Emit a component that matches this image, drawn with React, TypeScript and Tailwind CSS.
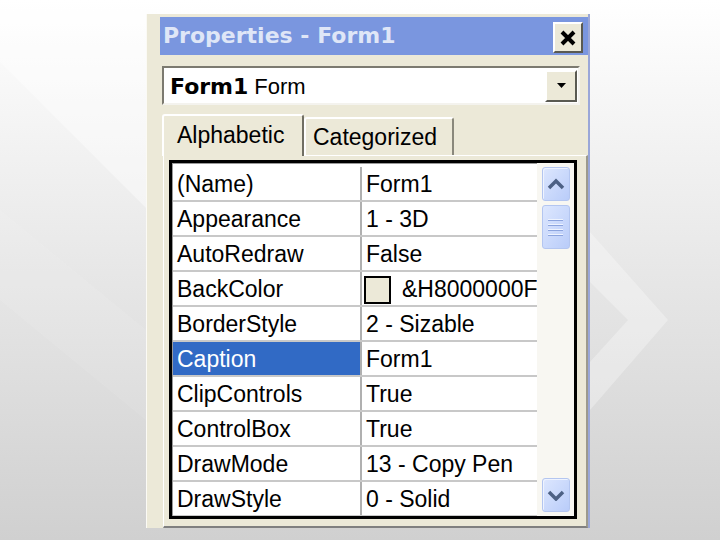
import React from "react";

type Row = { name: string; value: string; swatch?: boolean; selected?: boolean };

const rows: Row[] = [
  { name: "(Name)", value: "Form1" },
  { name: "Appearance", value: "1 - 3D" },
  { name: "AutoRedraw", value: "False" },
  { name: "BackColor", value: "&H8000000F", swatch: true },
  { name: "BorderStyle", value: "2 - Sizable" },
  { name: "Caption", value: "Form1", selected: true },
  { name: "ClipControls", value: "True" },
  { name: "ControlBox", value: "True" },
  { name: "DrawMode", value: "13 - Copy Pen" },
  { name: "DrawStyle", value: "0 - Solid" },
];

const sans = "font-['Liberation_Sans',Arial,sans-serif]";
const bold = "font-['DejaVu_Sans',Verdana,sans-serif] font-bold";

function ScrollButton({ dir }: { dir: "up" | "down" }) {
  return (
    <div className="mx-auto flex h-[34px] w-[28px] items-center justify-center rounded-[3px] border border-[#b4c6f0] bg-gradient-to-br from-[#dde7fe] to-[#b9ccf9] shadow-[inset_1px_1px_0_#eef3ff]">
      <svg width="18" height="12" viewBox="0 0 18 12">
        <polyline
          points={dir === "up" ? "2,10 9,3 16,10" : "2,3 9,10 16,3"}
          fill="none"
          stroke="#4d6185"
          strokeWidth="3.5"
        />
      </svg>
    </div>
  );
}

function GridRow({ row }: { row: Row }) {
  return (
    <div className="flex h-[35px] shrink-0 border-b-2 border-[#c8c8c8]">
      <div
        className={`flex w-[189px] shrink-0 items-center border-r-2 border-[#b0b0b0] pl-[4px] pt-[2px] ${
          row.selected ? "bg-[#316ac5] text-white" : "text-black"
        }`}
      >
        {row.name}
      </div>
      <div className="flex min-w-0 flex-1 items-center overflow-hidden whitespace-nowrap pl-[4px] pt-[2px] text-black">
        {row.swatch && (
          <span className="mr-[11px] ml-[-2px] h-[28px] w-[27px] shrink-0 border-2 border-black bg-[#ece9d8]" />
        )}
        {row.value}
      </div>
    </div>
  );
}

export default function App() {
  return (
    <div className="relative h-[540px] w-[720px] overflow-hidden bg-gradient-to-b from-white to-[#d0d0d0]">
      {/* faint background shapes */}
      <svg className="absolute inset-0" width="720" height="540" viewBox="0 0 720 540">
        <polygon points="0,0 146,0 146,208 0,62" fill="#ffffff" opacity="0.4" />
        <polygon points="0,210 146,330 146,420 0,300" fill="#ffffff" opacity="0.08" />
        <polygon points="590,232 668,320 590,410 590,362 628,320 590,282" fill="#ffffff" opacity="0.3" />
      </svg>

      <div className="relative ml-[146px] mt-[14px] flex h-[514px] w-[444px] border-l border-r-2 border-l-[#fbfaf5] border-r-[#9aa7d8] bg-[#ece9d8]">
        <div className="w-[13px] shrink-0" />
        <div className="flex flex-1 flex-col">
          {/* title bar */}
          <div className="mt-[3px] flex h-[38px] shrink-0 items-center justify-between bg-[#7a96df] pl-[3px]">
            <span className={`${bold} text-[22px] leading-none text-[#dfe6f7]`}>Properties - Form1</span>
            <div className="mr-[5px] mt-[3px] flex h-[31px] w-[30px] items-center justify-center border-2 border-b-[#5a5a52] border-l-white border-r-[#5a5a52] border-t-white bg-[#ece9d8]">
              <svg width="18" height="18" viewBox="0 0 18 18">
                <path d="M3 3 L15 15 M15 3 L3 15" stroke="#000" strokeWidth="4" />
              </svg>
            </div>
          </div>

          {/* object combo */}
          <div className="ml-[2px] mt-[11px] flex h-[39px] w-[418px] shrink-0 items-center border-2 border-b-[#f4f3ee] border-l-[#7c7a70] border-r-[#f4f3ee] border-t-[#7c7a70] bg-white">
            <div className="flex flex-1 items-center pl-[6px] pt-[2px] text-[22px] leading-none text-black">
              <span className={bold}>Form1</span>
              <span className={`${sans} ml-[6px]`}>Form</span>
            </div>
            <div className="mr-[1px] flex h-[32px] w-[32px] items-center justify-center border-2 border-b-[#5a5a52] border-l-white border-r-[#5a5a52] border-t-white bg-[#ece9d8]">
              <svg width="9" height="5" viewBox="0 0 9 5">
                <polygon points="0,0 9,0 4.5,5" fill="#000" />
              </svg>
            </div>
          </div>

          {/* tabs */}
          <div className={`${sans} ml-[2px] mt-[9px] flex h-[41px] shrink-0 items-end text-[23px] leading-none text-black`}>
            <div className="relative z-10 -mb-px flex h-[42px] w-[142px] items-center rounded-t-[3px] border-l-2 border-r-2 border-t-2 border-l-white border-r-[#716f64] border-t-white bg-[#ece9d8] pl-[13px] pb-[2px]">
              Alphabetic
            </div>
            <div className="flex h-[38px] w-[150px] items-center rounded-t-[3px] border-l-2 border-r-2 border-t-2 border-l-white border-r-[#8a887c] border-t-white bg-[#ece9d8] pl-[7px]">
              Categorized
            </div>
          </div>

          {/* tab page */}
          <div className="ml-[3px] flex flex-1 flex-col border-b-2 border-l border-r-2 border-t border-b-[#808080] border-l-white border-r-[#9c9a8e] border-t-white">
            <div className={`${sans} ml-[5px] mt-[4px] flex h-[359px] w-[408px] border-[3px] border-black bg-white text-[23px] leading-none`}>
              <div className="flex min-w-0 flex-1 flex-col overflow-hidden border-l border-t border-[#9a9a9a] pt-[3px]">
                {rows.map((r) => (
                  <GridRow key={r.name} row={r} />
                ))}
              </div>
              <div className="flex w-[37px] shrink-0 flex-col bg-[#f8f7f2] pb-[4px] pt-[4px]">
                <ScrollButton dir="up" />
                <div className="mx-auto mt-[4px] flex h-[44px] w-[28px] flex-col items-center justify-center gap-[3px] rounded-[3px] border border-[#b4c6f0] bg-gradient-to-br from-[#dde7fe] to-[#b9ccf9]">
                  {[0, 1, 2, 3].map((i) => (
                    <div key={i} className="h-[2px] w-[15px] border-b border-[#8ca4de] bg-[#eef3fe]" />
                  ))}
                </div>
                <div className="flex-1" />
                <ScrollButton dir="down" />
              </div>
            </div>
          </div>
        </div>
      </div>
    </div>
  );
}
